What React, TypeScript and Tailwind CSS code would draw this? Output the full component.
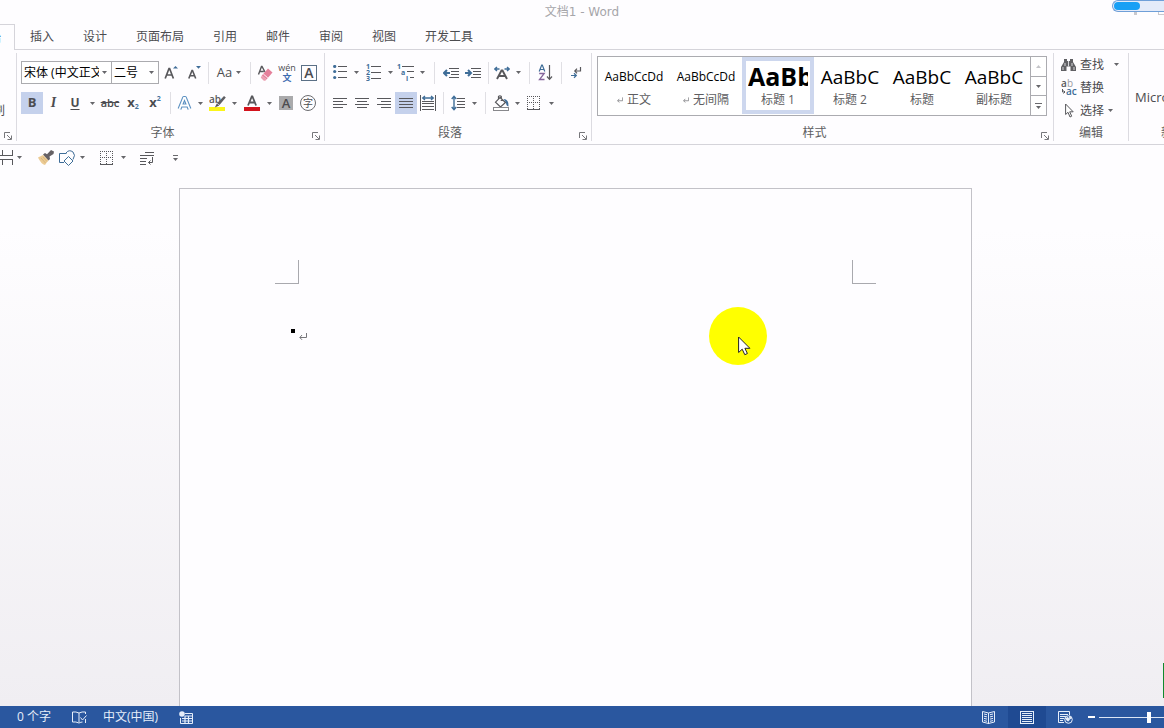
import type { ReactNode } from "react";

const INK = "#58585c";
const BLUE = "#3f6d98";

function Caret() {
  return (
    <svg width="5" height="3" viewBox="0 0 5 3" className="shrink-0" aria-hidden="true">
      <path d="M0 0h5L2.500 3z" fill="#66666a" />
    </svg>
  );
}

function Tool({
  label,
  width = "w-[22px]",
  active = false,
  children,
}: {
  label: string;
  width?: string;
  active?: boolean;
  children: ReactNode;
}) {
  return (
    <button
      type="button"
      aria-label={label}
      className={`flex h-[22px] shrink-0 items-center justify-center ${width} ${active ? "bg-[#c5d1ec]" : "hover:bg-[#dfe6f5]"}`}
    >
      {children}
    </button>
  );
}

function More({ label }: { label: string }) {
  return (
    <Tool label={label} width="w-3">
      <Caret />
    </Tool>
  );
}

function Sep({ width = "w-2" }: { width?: string }) {
  return (
    <div className={`flex h-[22px] shrink-0 justify-center ${width}`}>
      <div className="w-px bg-[#e0dfe4]" />
    </div>
  );
}

function Lines({ rows }: { rows: [number, number][] }) {
  return (
    <svg width="14" height="12" viewBox="0 0 14 12" shapeRendering="crispEdges" aria-hidden="true">
      {rows.map(([x, w], i) => (
        <rect key={i} x={x} y={1 + i * 3} width={w} height="1" fill={INK} />
      ))}
    </svg>
  );
}

function Launcher({ label }: { label: string }) {
  return (
    <button type="button" aria-label={label} className="shrink-0">
      <svg width="8" height="8" viewBox="0 0 8 8" fill="none" stroke="#77777b" aria-hidden="true">
        <path d="M.5 6V.5H6M3 3l4 4M7.500 3.500v4h-4" />
      </svg>
    </button>
  );
}

function Group({
  title,
  launcher,
  className = "",
  children,
}: {
  title: string;
  launcher?: boolean;
  className?: string;
  children: ReactNode;
}) {
  return (
    <section aria-label={title} className={`flex shrink-0 flex-col ${className}`}>
      <div className="h-[70px]">{children}</div>
      <div className="flex h-[19px] items-end">
        <h2 className={`flex-1 text-center leading-[18px] text-[#5d5d61] ${launcher ? "pr-1" : ""}`}>{title}</h2>
        {launcher && (
          <div className="flex pr-1 pb-0.5">
            <Launcher label={`${title}设置`} />
          </div>
        )}
      </div>
    </section>
  );
}

function Divider() {
  return <div className="my-[3px] w-px shrink-0 bg-[#dcdbe1]" />;
}

function BorderGrid() {
  return (
    <svg width="14" height="14" viewBox="0 0 14 14" shapeRendering="crispEdges" stroke={INK} fill="none" aria-hidden="true">
      <path d="M0 .5h13M0 6.500h13M.5 0v13M6.500 0v13M12.500 0v13" strokeDasharray="1 1" />
      <path d="M0 13.500h13" />
    </svg>
  );
}

function ReturnMark({ small = false }: { small?: boolean }) {
  return (
    <svg width={small ? 6 : 8} height={small ? 6 : 7} viewBox="0 0 8 7" fill="none" stroke="#77777b" aria-hidden="true">
      <path d="M7.500 0v4.500H1M3 2L.8 4.500 3 6.800" />
    </svg>
  );
}

function FontGroup() {
  return (
    <Group title="字体" launcher className="w-[307px]">
      <div className="flex flex-col gap-2 pt-2 pl-1">
        <div className="flex items-center">
          <label className="flex h-[23px] w-[91px] items-center border border-[#ababaf] bg-white pr-1">
            <select aria-label="字体" className="min-w-0 flex-1 appearance-none overflow-hidden pl-0.5 text-clip text-black outline-none">
              <option>宋体 (中文正文)</option>
            </select>
            <span className="flex w-2 justify-end">
              <Caret />
            </span>
          </label>
          <label className="-ml-px flex h-[23px] w-12 items-center border border-[#ababaf] bg-white pr-1">
            <select aria-label="字号" className="min-w-0 flex-1 appearance-none pl-0.5 text-black outline-none">
              <option>二号</option>
            </select>
            <Caret />
          </label>
          <Tool label="增大字号" width="w-6">
            <svg width="14" height="15" viewBox="0 0 14 15" fill="none" aria-hidden="true">
              <path d="M1.200 13.500L5 3.500h.6l3.800 10M2.600 10h5.500" stroke={INK} strokeWidth="1.700" />
              <path d="M9 3.500h5L11.500 1z" fill={BLUE} />
            </svg>
          </Tool>
          <Tool label="减小字号">
            <svg width="14" height="15" viewBox="0 0 14 15" fill="none" aria-hidden="true">
              <path d="M1.800 13.500L5 5.500h.5l3.200 8M3 10.800h4.500" stroke={INK} strokeWidth="1.600" />
              <path d="M9 1h5l-2.500 2.700z" fill={BLUE} />
            </svg>
          </Tool>
          <Sep width="w-[7px]" />
          <Tool label="更改大小写" width="w-[34px]">
            <span className="mr-1 text-[13px]">Aa</span>
            <Caret />
          </Tool>
          <Sep />
          <Tool label="清除格式">
            <svg width="16" height="16" viewBox="0 0 16 16" fill="none" aria-hidden="true">
              <path d="M1.500 9.500L4.500 1.500h.5L8 7M2.800 6.500h4" stroke={INK} strokeWidth="1.400" />
              <path d="M11 3.500l4.500 4-6 7-4.700-4z" fill="#e5809b" />
              <path d="M4.800 10.500l4.700 4-1.200 1.200h-1.500L3.800 12.800z" fill="#eb9fb2" />
              <path d="M6.300 9l4.500 3.900" stroke="#fff" strokeWidth=".9" />
            </svg>
          </Tool>
          <Tool label="拼音指南">
            <span className="flex flex-col items-center">
              <span className="text-[9px] leading-[10px]">wén</span>
              <span className="text-[9px] leading-[10px] font-bold text-[#3d6cb0]">文</span>
            </span>
          </Tool>
          <Tool label="字符边框">
            <span className="flex size-4 items-center justify-center border border-[#5b7086] text-sm leading-none font-semibold">A</span>
          </Tool>
        </div>
        <div className="flex items-center">
          <Tool label="加粗" active>
            <b className="text-[13px]">B</b>
          </Tool>
          <Tool label="倾斜" width="w-[21px]">
            <i className="font-['Liberation_Serif',serif] text-sm font-bold">I</i>
          </Tool>
          <Tool label="下划线">
            <span className="text-xs font-bold underline underline-offset-2">U</span>
          </Tool>
          <More label="下划线选项" />
          <Tool label="删除线" width="w-6">
            <span className="text-[11px] font-semibold line-through">abc</span>
          </Tool>
          <Tool label="下标">
            <span className="text-[13px] font-bold">x</span>
            <span className="pt-2 text-[7px] font-bold text-[#44729c]">2</span>
          </Tool>
          <Tool label="上标">
            <span className="text-[13px] font-bold">x</span>
            <span className="pb-2 text-[7px] font-bold text-[#44729c]">2</span>
          </Tool>
          <Sep />
          <Tool label="文本效果" width="w-5">
            <svg width="15" height="15" viewBox="0 0 15 15" fill="none" aria-hidden="true">
              <path d="M2.500 13L7 2h1l4.500 11M4.500 9.500h6" stroke="#5c91c2" strokeWidth="4" strokeLinejoin="round" />
              <path d="M2.500 13L7 2h1l4.500 11M4.500 9.500h6" stroke="#fff" strokeWidth="1.800" />
            </svg>
          </Tool>
          <More label="文本效果选项" />
          <Tool label="突出显示">
            <svg width="17" height="16" viewBox="0 0 17 16" aria-hidden="true">
              <rect x="0" y="12" width="16" height="4" fill="#fbf51a" />
              <text x="0" y="8" fontSize="10" fontWeight="600" fill={INK}>ab</text>
              <path d="M15 1l1.800 1.500-6.300 7.500-2.300-1.800z" fill="#5f5f63" />
              <path d="M7.800 8.500l2.500 2-4.500 2z" fill={INK} />
            </svg>
          </Tool>
          <More label="突出显示颜色" />
          <Tool label="字体颜色" width="w-6">
            <svg width="16" height="16" viewBox="0 0 16 16" fill="none" aria-hidden="true">
              <path d="M4 10.500L7.800 1.500h.6l3.700 9M5.500 7.500h5.300" stroke={INK} strokeWidth="1.800" />
              <rect y="12" width="16" height="4" fill="#d3131d" />
            </svg>
          </Tool>
          <Tool label="字体颜色选项" width="w-[10px]">
            <Caret />
          </Tool>
          <Tool label="字符底纹" width="w-6">
            <span className="flex size-[14px] items-center justify-center bg-[#aaaaac] text-[13px] leading-none font-semibold">A</span>
          </Tool>
          <Tool label="带圈字符" width="w-5">
            <span className="flex size-4 shrink-0 items-center justify-center rounded-full border border-[#6b6b6f] text-[10px] leading-none">字</span>
          </Tool>
        </div>
      </div>
    </Group>
  );
}

function ParagraphGroup() {
  return (
    <Group title="段落" launcher className="w-[266px]">
      <div className="flex flex-col gap-2 pt-2 pl-1">
        <div className="flex h-[23px] items-center">
          <Tool label="项目符号" width="w-[21px]">
            <svg width="14" height="15" viewBox="0 0 14 15" aria-hidden="true">
              {[1, 6, 12].map((y) => (
                <g key={y}>
                  <circle cx="1.700" cy={y + 0.5} r="1.600" fill={BLUE} />
                  <rect x="5" y={y} width="9" height="1" fill={INK} />
                </g>
              ))}
            </svg>
          </Tool>
          <More label="项目符号选项" />
          <Tool label="编号">
            <svg width="15" height="17" viewBox="0 0 15 17" aria-hidden="true">
              {[1, 2, 3].map((n) => (
                <g key={n}>
                  <text x="0" y={n * 6 - 1} fontSize="7" fontWeight="700" fill={BLUE}>{n}</text>
                  <rect x="5" y={n * 6 - 4} width="10" height="1" fill={INK} />
                </g>
              ))}
            </svg>
          </Tool>
          <More label="编号选项" />
          <Tool label="多级列表" width="w-5">
            <svg width="18" height="17" viewBox="0 0 18 17" className="shrink-0" aria-hidden="true">
              <text x="0" y="5" fontSize="7" fontWeight="700" fill={BLUE}>1</text>
              <text x="4" y="11" fontSize="7" fontWeight="700" fill={BLUE}>a</text>
              <text x="9" y="17" fontSize="7" fontWeight="700" fill={BLUE}>i</text>
              <path d="M5 2.500h12M10 7.500h7M13 13.500h4" stroke={INK} />
            </svg>
          </Tool>
          <More label="多级列表选项" />
          <Sep width="w-3" />
          <Tool label="减少缩进量">
            <svg width="16" height="12" viewBox="0 0 16 12" fill="none" aria-hidden="true">
              <path d="M6 1.500h10M8 4.500h8M8 7.500h8M6 10.500h10" stroke={INK} />
              <path d="M7 6H1.500M4 3L1 6l3 3" stroke={BLUE} strokeWidth="2" />
            </svg>
          </Tool>
          <Tool label="增加缩进量">
            <svg width="16" height="12" viewBox="0 0 16 12" fill="none" aria-hidden="true">
              <path d="M6 1.500h10M8 4.500h8M8 7.500h8M6 10.500h10" stroke={INK} />
              <path d="M0 6h5.500M3 3l3 3-3 3" stroke={BLUE} strokeWidth="2" />
            </svg>
          </Tool>
          <Sep />
          <Tool label="中文版式" width="w-5">
            <svg width="16" height="14" viewBox="0 0 16 14" fill="none" aria-hidden="true">
              <path d="M3 13L7.500 4.500h1L13 13M5 10h6" stroke={INK} strokeWidth="1.900" />
              <path d="M5.500 3H1M3 1L.8 3 3 5M10.500 3H15M13 1l2.200 2L13 5" stroke={BLUE} strokeWidth="1.400" />
            </svg>
          </Tool>
          <More label="中文版式选项" />
          <Sep width="w-[10px]" />
          <Tool label="排序">
            <svg width="15" height="17" viewBox="0 0 15 17" fill="none" aria-hidden="true">
              <path d="M1.200 7.500L3.700 1h.6l2.500 6.500M2.200 5.500h3.600" stroke={BLUE} strokeWidth="1.200" />
              <path d="M1.200 9.500h5L1.500 15.500h5" stroke="#85659b" strokeWidth="1.300" />
              <path d="M11.500 1v14M9 12.500l2.500 2.800 2.500-2.800" stroke={INK} strokeWidth="1.200" />
            </svg>
          </Tool>
          <Sep width="w-[10px]" />
          <Tool label="显示编辑标记" width="w-5">
            <svg width="12" height="13" viewBox="0 0 12 13" fill="none" aria-hidden="true">
              <path d="M10.500 1v4H5M7 2.700L4.800 5 7 7.300" stroke={INK} strokeWidth="1.200" />
              <path d="M1 9.500h5M4 7.300l2.300 2.200L4 11.700" stroke={BLUE} strokeWidth="1.200" />
            </svg>
          </Tool>
        </div>
        <div className="flex items-center">
          <Tool label="左对齐">
            <Lines rows={[[0, 14], [0, 10], [0, 14], [0, 10]]} />
          </Tool>
          <Tool label="居中">
            <Lines rows={[[0, 14], [2, 10], [0, 14], [2, 10]]} />
          </Tool>
          <Tool label="右对齐">
            <Lines rows={[[0, 14], [4, 10], [0, 14], [4, 10]]} />
          </Tool>
          <Tool label="两端对齐" active>
            <Lines rows={[[0, 14], [0, 14], [0, 14], [0, 14]]} />
          </Tool>
          <Tool label="分散对齐">
            <svg width="16" height="16" viewBox="0 0 16 16" fill="none" aria-hidden="true">
              <path d="M.5 0v16M15.500 0v16" stroke={INK} />
              <path d="M2 6.500h12M2 8.500h12M2 11.500h12M2 14.500h12" stroke={INK} />
              <path d="M3 3h10M5 1L2.700 3 5 5M11 1l2.300 2L11 5" stroke={BLUE} strokeWidth="1.300" />
            </svg>
          </Tool>
          <Sep />
          <Tool label="行距" width="w-[22px]">
            <svg width="15" height="16" viewBox="0 0 15 16" fill="none" aria-hidden="true">
              <path d="M6 3.500h8M6 6.500h8M6 9.500h8M6 12.500h8" stroke={INK} />
              <path d="M3 1.500v13M.7 4L3 1.300 5.300 4M.7 12L3 14.700 5.300 12" stroke={BLUE} strokeWidth="1.400" />
            </svg>
          </Tool>
          <Tool label="行距选项" width="w-[10px]">
            <Caret />
          </Tool>
          <Sep width="w-3" />
          <Tool label="底纹" width="w-5">
            <svg width="17" height="16" viewBox="0 0 17 16" fill="none" aria-hidden="true">
              <path d="M7 2.500l5.500 5L7.500 12 2.500 7.200zM5.500 5V1.500Q7 0 8.300 1.500V6" stroke={INK} strokeWidth="1.200" />
              <path d="M10.500 4q5.500 0 5 7.500-2.500-.5-2.500-4z" fill={BLUE} />
              <rect x=".5" y="12.500" width="15" height="3" stroke="#88888c" fill="#fff" />
            </svg>
          </Tool>
          <More label="底纹选项" />
          <Tool label="边框">
            <BorderGrid />
          </Tool>
          <More label="边框选项" />
        </div>
      </div>
    </Group>
  );
}

const styleItems = [
  { sample: "AaBbCcDd", name: "正文", size: "text-xs", mark: true },
  { sample: "AaBbCcDd", name: "无间隔", size: "text-xs", mark: true },
  { sample: "AaBb", name: "标题 1", size: "text-[25px] font-bold", active: true },
  { sample: "AaBbC", name: "标题 2", size: "text-[19px]" },
  { sample: "AaBbC", name: "标题", size: "text-[19px]" },
  { sample: "AaBbC", name: "副标题", size: "text-[19px]" },
];

function StylesGroup() {
  return (
    <Group title="样式" launcher className="w-[461px]">
      <div className="px-[5px] pt-[3px]">
        <div className="flex h-[60px] w-[450px] border border-[#ababb0] bg-white">
          {styleItems.map((s) => (
            <button
              key={s.name}
              type="button"
              className={`flex h-[57px] w-[72px] shrink-0 flex-col overflow-hidden border-4 ${s.active ? "border-[#cdd7ee]" : "border-transparent"}`}
            >
              <span className={`flex h-[29px] w-full items-center overflow-hidden whitespace-nowrap text-black ${s.active ? "px-0.5" : "justify-center pt-0.5"}`}>
                <span className={`${s.size} leading-7 ${s.active ? "overflow-hidden" : ""}`}>{s.sample}</span>
              </span>
              <span className="flex h-5 w-full items-center justify-center gap-1 leading-5 whitespace-nowrap text-[#5d5d61]">
                {s.mark && <ReturnMark small />}
                {s.name}
              </span>
            </button>
          ))}
          <div className="flex flex-1 flex-col divide-y divide-[#ababb0] border-l border-[#ababb0]">
            <button type="button" aria-label="上一行" className="flex flex-1 items-center justify-center">
              <svg width="5" height="3" viewBox="0 0 5 3" aria-hidden="true">
                <path d="M0 3h5L2.500 0z" fill="#c4c4c8" />
              </svg>
            </button>
            <button type="button" aria-label="下一行" className="flex flex-1 items-center justify-center">
              <Caret />
            </button>
            <button type="button" aria-label="其他样式" className="flex flex-1 flex-col items-center justify-center gap-0.5">
              <span className="h-px w-[7px] bg-[#6a6a6e]" />
              <Caret />
            </button>
          </div>
        </div>
      </div>
    </Group>
  );
}

function EditGroup() {
  return (
    <Group title="编辑" className="w-[74px]">
      <div className="flex flex-col pl-[7px]">
        <button type="button" className="flex h-[23px] items-center">
          <svg width="15" height="14" viewBox="0 0 15 14" className="mr-1" aria-hidden="true">
            <path d="M3 1h3v2h3V1h3v3l3 5v4H9.500V8.500h-4V13H0V9l3-5z" fill="#606064" />
            <path d="M7.500 3v5.500M2 9v3M4 5v3M11 5v3M13 9v3" stroke="#d6d6da" />
          </svg>
          查找
          <span className="ml-[10px]">
            <Caret />
          </span>
        </button>
        <button type="button" className="flex h-[23px] items-center">
          <svg width="16" height="18" viewBox="0 0 16 18" className="mr-[3px]" aria-hidden="true">
            <text x="0" y="8" fontSize="10" fontWeight="600" fill={INK}>a</text>
            <text x="6" y="8" fontSize="10" fill="#9b9ba0">b</text>
            <text x="5" y="16" fontSize="10" fontWeight="600" fill={BLUE}>ac</text>
            <path d="M1.500 10v3h2.500M2.500 11.500L4 13l-1.500 1.500" stroke={INK} fill="none" />
          </svg>
          替换
        </button>
        <button type="button" className="flex h-[23px] items-center">
          <svg width="9" height="15" viewBox="0 0 9 15" className="mr-[6px] ml-1" fill="#fff" stroke={INK} aria-hidden="true">
            <path d="M.6 1v10.500l2.400-2.200 2 4.700 1.700-.8-2-4.400h3.500z" />
          </svg>
          选择
          <span className="ml-1">
            <Caret />
          </span>
        </button>
      </div>
    </Group>
  );
}

function Ribbon() {
  return (
    <div className="flex h-[95px] overflow-hidden border-b border-[#d5d4da]">
      <section aria-label="剪贴板" className="flex w-4 shrink-0 flex-col overflow-hidden pt-[53px]">
        <button type="button" aria-label="格式刷" className="flex h-4 w-[5px] justify-end overflow-hidden leading-4">
          <span className="shrink-0">刷</span>
        </button>
        <div className="flex pt-[13px] pl-1">
          <Launcher label="剪贴板设置" />
        </div>
      </section>
      <Divider />
      <div className="flex pt-[3px]">
        <FontGroup />
      </div>
      <Divider />
      <div className="flex pt-[3px]">
        <ParagraphGroup />
      </div>
      <Divider />
      <div className="flex pt-[3px]">
        <StylesGroup />
      </div>
      <Divider />
      <div className="flex pt-[3px]">
        <EditGroup />
      </div>
      <Divider />
      <section className="flex min-w-0 flex-1 flex-col overflow-hidden pt-[37px] whitespace-nowrap">
        <button type="button" className="pl-[6px] text-left text-[13px] leading-5">
          Microsoft
        </button>
        <h2 className="pt-[17px] pl-8 leading-[18px] text-[#5d5d61]">新建组</h2>
      </section>
    </div>
  );
}

function QuickAccess() {
  return (
    <div className="flex h-[27px] items-center pb-0.5">
      <Tool label="分隔符" width="w-[13px]">
        <svg width="13" height="15" viewBox="0 0 13 15" fill="none" stroke={INK} shapeRendering="crispEdges" aria-hidden="true">
          <path d="M0 5.500h12.500V0M0 9.500h12.500V15M2.500 0v5M2.500 10v5" />
        </svg>
      </Tool>
      <More label="分隔符选项" />
      <div className="flex items-center gap-[3px] pl-3">
        <Tool label="格式刷" width="w-[18px]">
          <svg width="16" height="15" viewBox="0 0 16 15" aria-hidden="true">
            <path d="M0 7.500l5-2.500 5.500 5L7 15q-4-1-7-7.500z" fill="#eccb94" />
            <path d="M5 4.500l2-1.500 2 1.200L13 0l3 1.500-.5 2.500-4 2.500.5 2.500-1.500 1.500z" fill="#666165" />
            <path d="M3 8l4.500 5M5 7l4 4.500" stroke="#d9b67c" />
          </svg>
        </Tool>
        <Tool label="形状" width="w-[18px]">
          <svg width="18" height="16" viewBox="0 0 18 16" fill="none" stroke={BLUE} className="shrink-0" aria-hidden="true">
            <path d="M6 12.500H1.500v-9h7" />
            <path d="M8 3q3-4 7-1 3 3 0 7.500" />
            <path d="M10.500 6.500l4.500 4.500-4.500 4.500L6 11z" fill="#fff" />
          </svg>
        </Tool>
      </div>
      <More label="形状选项" />
      <div className="flex items-center pl-[9px]">
        <Tool label="边框" width="w-5">
          <BorderGrid />
        </Tool>
        <More label="边框选项" />
      </div>
      <div className="flex items-center gap-[11px] pl-[9px]">
        <Tool label="换行" width="w-[18px]">
          <svg width="14" height="14" viewBox="0 0 14 14" fill="none" stroke={INK} aria-hidden="true">
            <path d="M5 1.500h9M0 4.500h14M0 7.500h7M0 10.500h6M0 13.500h6M12.500 6v5.500H8.500M10.500 9.500l-2 2 2 2" />
          </svg>
        </Tool>
        <Tool label="自定义快速访问工具栏" width="w-4">
          <span className="flex flex-col items-center gap-0.5">
            <span className="h-px w-[5px] bg-[#6a6a6e]" />
            <Caret />
          </span>
        </Tool>
      </div>
    </div>
  );
}

const tabs = ["插入", "设计", "页面布局", "引用", "邮件", "审阅", "视图", "开发工具"];

function StatusBar() {
  return (
    <footer className="flex h-[22px] items-center overflow-hidden bg-[#2a579f] text-[#e6eefa]">
      <button type="button" className="pl-[17px] leading-5">0 个字</button>
      <button type="button" aria-label="拼写检查" className="ml-[21px]">
        <svg width="15" height="13" viewBox="0 0 15 13" fill="none" stroke="currentColor" aria-hidden="true">
          <path d="M7 2v9M7 2Q4 .5.500 1v10q3.500-.5 6.500 1 2-1 3.500-1M7 2q3-1.500 6.500-1v2M8.500 6.500l2 2.500 4-4.500M13.500 8v4" />
        </svg>
      </button>
      <button type="button" className="ml-4 leading-5">中文(中国)</button>
      <button type="button" aria-label="宏录制" className="ml-[21px]">
        <svg width="14" height="13" viewBox="0 0 14 13" fill="none" stroke="currentColor" aria-hidden="true">
          <path d="M6 2.500h7.500v10h-12V7" />
          <path d="M6 5h7M3 7.500h10M3 10h10M6 5v7M9.500 5v7" strokeWidth="1.200" />
          <circle cx="3" cy="3" r="2.800" fill="currentColor" stroke="none" />
        </svg>
      </button>
      <div className="ml-auto flex h-full items-center">
        <button type="button" aria-label="阅读视图" className="flex h-full w-[38px] items-center justify-center">
          <svg width="14" height="13" viewBox="0 0 14 13" fill="none" stroke="currentColor" aria-hidden="true">
            <path d="M6.500 2v11M6.500 2L.5.500v10.500l6 1.500 6-1.500V.5z" />
            <path d="M2 3l3 .7M2 5.200l3 .7M2 7.400l3 .7M2 9.600l3 .7M11 3l-3 .7M11 5.200l-3 .7M11 7.400l-3 .7M11 9.600l-3 .7" />
          </svg>
        </button>
        <button type="button" aria-label="页面视图" className="flex h-full w-[38px] items-center justify-center bg-[#1f4a92]">
          <svg width="14" height="13" viewBox="0 0 14 13" fill="none" stroke="currentColor" shapeRendering="crispEdges" aria-hidden="true">
            <path d="M.5.500h13v12H.5zM2 2.500h10M2 4.500h10M2 6.500h10M2 8.500h10M2 10.500h10" />
          </svg>
        </button>
        <button type="button" aria-label="Web 版式视图" className="flex h-full w-[38px] items-center justify-center">
          <svg width="15" height="13" viewBox="0 0 15 13" fill="none" stroke="currentColor" aria-hidden="true">
            <path d="M6 11.500H.5V.500h11V4M2 3.500h8M2 5.500h6M2 7.500h4M2 9.500h3" />
            <circle cx="10.500" cy="8.500" r="3.800" fill="#2a579f" />
            <path d="M7.500 7.500l2.500-1 1.500 1.500-1 2-1.500-.5zM11.500 5.500l2 1.500-1.500 1z" fill="currentColor" />
          </svg>
        </button>
        <button type="button" aria-label="缩小" className="mr-1 ml-1 flex h-full w-[7px] items-center">
          <span className="h-0.5 w-full bg-white" />
        </button>
        <div className="flex w-[65px] overflow-hidden">
          <input
            type="range"
            aria-label="缩放"
            min="10"
            max="190"
            defaultValue="100"
            className="h-3 w-[100px] shrink-0 appearance-none bg-transparent [&::-webkit-slider-runnable-track]:h-px [&::-webkit-slider-runnable-track]:bg-[#dce6f5] [&::-webkit-slider-thumb]:-mt-[5px] [&::-webkit-slider-thumb]:h-[11px] [&::-webkit-slider-thumb]:w-1 [&::-webkit-slider-thumb]:appearance-none [&::-webkit-slider-thumb]:bg-white"
          />
        </div>
      </div>
    </footer>
  );
}

export default function App() {
  return (
    <div className="relative flex h-screen flex-col overflow-hidden bg-[#fefdff] font-['Open_Sans','Noto_Sans_CJK_SC',sans-serif] text-xs text-[#4c4c50]">
      <header className="flex h-6 shrink-0 items-center justify-center">
        <h1 className="font-['DejaVu_Sans','Noto_Sans_CJK_SC',sans-serif] text-[#a6a6aa]">文档1 - Word</h1>
      </header>
      <div className="absolute top-0 right-0 flex w-[52px] flex-col">
        <div className="h-3 overflow-hidden rounded-l-full border border-r-0 border-[#6f9fd8] bg-[#e4ebf9] p-px">
          <div className="h-full w-[26px] rounded-full bg-[#18a0f5]" />
        </div>
        <div className="flex justify-between pl-[22px]">
          <span className="h-[3px] w-[3px] bg-[#c9c9ce]" />
          <span className="h-[3px] w-[6px] border-b border-l border-[#c9c9ce]" />
        </div>
      </div>

      <nav className="flex h-[26px] shrink-0 items-stretch" role="tablist">
        <button
          type="button"
          role="tab"
          aria-selected="true"
          className="flex w-[15px] items-center justify-end overflow-hidden border-t border-r border-[#d5d4da] pr-[13px] whitespace-nowrap text-[#2b579a]"
        >
          开始
        </button>
        <div className="flex flex-1 items-center gap-[29px] border-b border-[#d5d4da] pl-[15px]">
          {tabs.map((t) => (
            <button key={t} type="button" role="tab" aria-selected="false" className="leading-5">
              {t}
            </button>
          ))}
        </div>
      </nav>

      <div className="shrink-0">
        <Ribbon />
      </div>

      <main className="flex min-h-0 flex-1 flex-col bg-linear-to-b from-[#fefdff] from-15% to-[#f0eef2]">
        <QuickAccess />
        <div className="flex min-h-0 flex-1 justify-center overflow-hidden pt-4 pr-[13px]">
          <article className="flex h-[1122px] w-[793px] shrink-0 flex-col border border-[#c3c2c8] bg-[#fefdff] px-[95px] pt-[71px]">
            <div className="flex justify-between">
              <div className="size-6 border-r border-b border-[#a9a9ae]" />
              <div className="size-6 border-b border-l border-[#a9a9ae]" />
            </div>
            <div className="flex items-start gap-1 pt-[45px] pl-4">
              <span className="size-1 bg-black" />
              <span className="pt-1">
                <ReturnMark />
              </span>
            </div>
          </article>
        </div>
      </main>

      <div className="absolute top-[307px] left-[709px] flex size-[58px] rounded-full bg-[#ffff00] pt-[29px] pl-[29px]">
        <svg width="13" height="20" viewBox="0 0 13 20" fill="#fff" stroke="#222" className="shrink-0" aria-hidden="true">
          <path d="M.6 1v15.500l3.600-3.300 2.600 5.500 2.600-1.200-2.500-5.200h5z" />
        </svg>
      </div>
      <div className="absolute right-0 bottom-[30px] h-[35px] w-px bg-[#118a2c]" />

      <StatusBar />
    </div>
  );
}
